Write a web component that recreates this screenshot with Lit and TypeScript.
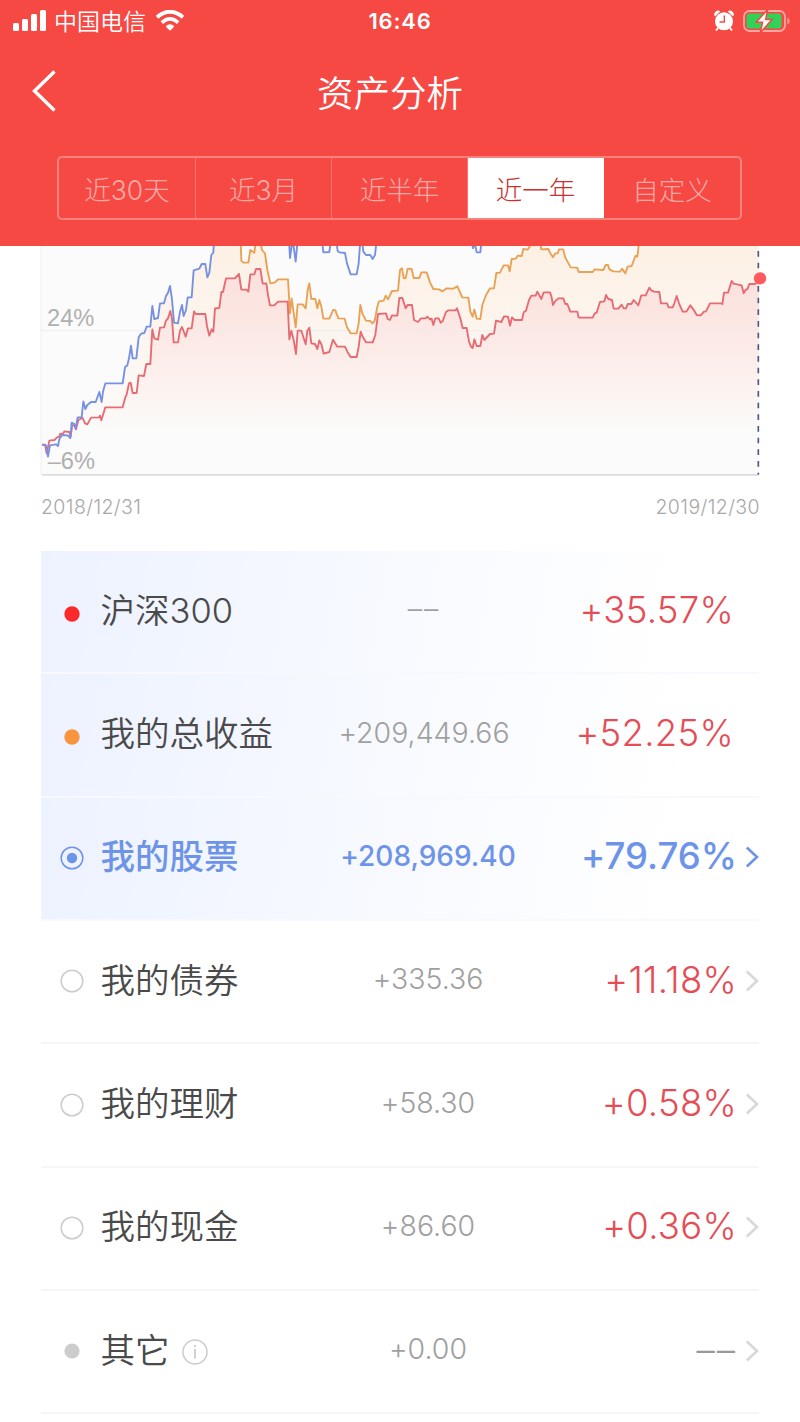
import { LitElement, html, svg, css, nothing } from "lit";
import { customElement, property, state } from "lit/decorators.js";
import { classMap } from "lit/directives/class-map.js";

interface Row {
  name: string;
  amount: string;
  percent: string;
  marker: "index" | "total" | "picked" | "radio" | "other";
  tinted?: boolean;
  link?: boolean;
  info?: boolean;
}

const ROWS: Row[] = [
  { name: "沪深300", amount: "––", percent: "+35.57%", marker: "index", tinted: true },
  { name: "我的总收益", amount: "+209,449.66", percent: "+52.25%", marker: "total", tinted: true },
  { name: "我的股票", amount: "+208,969.40", percent: "+79.76%", marker: "picked", tinted: true, link: true },
  { name: "我的债券", amount: "+335.36", percent: "+11.18%", marker: "radio", link: true },
  { name: "我的理财", amount: "+58.30", percent: "+0.58%", marker: "radio", link: true },
  { name: "我的现金", amount: "+86.60", percent: "+0.36%", marker: "radio", link: true },
  { name: "其它", amount: "+0.00", percent: "––", marker: "other", link: true, info: true },
];

// Series are stored at three units per CSS pixel.
const INDEX_LINE =
  "126,614 135,614 140,640 148,602 164,600 170,593 178,590 180,582 190,580 193,574 208,576 212,590 216,560 223,552 228,568 235,540 248,534 255,550 262,553 273,533 297,532 300,527 304,541 316,502 368,502 376,472 380,463 387,430 392,428 398,459 410,459 416,406 432,408 439,372 451,372 457,268 463,295 474,299 480,263 492,262 498,242 504,235 511,213 516,235 521,307 534,307 540,272 546,261 557,290 564,265 575,265 582,214 587,222 616,222 621,258 628,287 635,268 640,275 645,205 658,204 664,156 669,156 678,115 705,115 717,102 724,149 739,149 745,155 751,103 763,103 768,87 781,87 788,131 799,130 804,165 810,196 823,196 834,185 863,185 868,298 874,272 881,300 888,342 893,272 904,272 917,313 922,272 928,263 934,310 945,312 952,327 958,301 965,315 971,341 988,336 999,299 1012,320 1035,320 1042,335 1052,351 1070,351 1076,320 1082,275 1088,290 1098,307 1118,307 1126,285 1134,222 1158,220 1163,237 1170,240 1176,226 1192,227 1198,174 1207,174 1217,205 1223,195 1236,195 1242,240 1254,246 1263,235 1277,235 1282,230 1290,238 1295,236 1300,255 1306,235 1316,235 1322,248 1328,243 1338,216 1345,211 1366,211 1371,205 1381,235 1388,264 1400,264 1407,305 1413,320 1418,324 1423,298 1430,318 1441,318 1447,285 1453,300 1470,282 1482,281 1488,242 1504,246 1512,229 1524,230 1530,257 1536,232 1544,240 1566,240 1571,217 1578,212 1587,180 1594,167 1607,167 1612,155 1624,177 1631,157 1650,157 1654,168 1659,195 1665,184 1675,175 1690,175 1696,192 1702,192 1711,215 1732,215 1736,233 1778,233 1784,220 1790,218 1800,186 1813,184 1818,165 1825,177 1836,180 1841,206 1855,206 1865,194 1871,205 1878,205 1883,192 1894,192 1901,180 1915,196 1924,166 1937,166 1948,143 1954,151 1962,155 1978,156 1983,190 2001,190 2006,202 2018,202 2023,190 2030,168 2037,190 2048,215 2059,215 2071,196 2082,211 2090,225 2102,226 2112,215 2118,214 2130,190 2165,190 2167,193 2172,158 2184,158 2195,123 2201,131 2225,136 2231,160 2238,148 2242,148 2248,132 2266,132 2277,118";

const TOTAL_LINE =
  "722,0 724,62 730,68 745,68 751,30 763,38 768,0 780,0 786,30 795,40 802,90 811,130 823,128 835,118 864,118 870,220 875,175 887,262 893,193 908,193 917,205 923,150 928,130 934,177 946,177 952,205 958,180 964,200 970,236 988,236 1000,209 1006,211 1015,235 1034,236 1041,262 1052,280 1070,280 1076,250 1081,195 1087,220 1098,242 1111,243 1117,250 1124,243 1132,200 1137,184 1151,182 1157,167 1164,178 1176,153 1194,152 1200,90 1206,85 1211,114 1217,114 1223,86 1235,87 1241,114 1258,114 1264,97 1280,97 1290,127 1300,147 1317,148 1328,154 1340,145 1360,146 1372,139 1387,172 1405,173 1411,215 1418,230 1423,208 1430,236 1441,237 1447,195 1458,165 1470,145 1482,145 1489,99 1500,98 1511,76 1524,76 1529,94 1535,57 1547,56 1553,47 1565,48 1570,27 1583,29 1590,18 1600,10 1620,10 1624,28 1645,27 1650,38 1659,52 1666,40 1673,40 1677,28 1689,28 1696,53 1712,82 1732,83 1736,96 1778,96 1784,88 1810,90 1817,75 1824,75 1828,88 1840,94 1860,95 1866,86 1876,100 1883,80 1895,78 1906,48 1912,50 1918,0";

const STOCK_RISE =
  "126,614 138,616 144,650 150,616 162,614 169,613 174,618 178,598 186,585 203,586 211,594 215,548 222,552 227,566 233,532 245,532 250,484 256,507 262,495 273,486 287,486 298,456 305,486 309,455 316,430 368,430 375,382 382,376 387,355 393,317 398,355 409,355 416,292 423,281 433,279 440,260 451,260 457,198 463,237 474,234 480,190 492,190 498,168 504,158 510,138 516,178 522,248 534,250 540,215 546,195 551,228 558,210 563,172 575,172 581,91 598,86 605,72 616,72 622,112 628,98 634,45 640,38 642,0";

const STOCK_DIPS = [
  "867,0 870,54 876,12 880,12 887,65 893,0",
  "966,0 970,37 988,36 993,0",
  "1009,0 1013,33 1018,37 1035,39 1041,70 1052,103 1070,103 1076,70 1081,0 1086,0 1090,35 1098,45 1111,45 1118,57 1125,45 1130,0",
  "1416,8 1419,25 1424,8 1430,37 1441,37 1445,0",
];

const HAN = css`"Inter", "Noto Sans CJK SC", sans-serif`;

@customElement("status-bar")
class StatusBar extends LitElement {
  static styles = css`
    :host {
      display: grid;
      grid-template-columns: 1fr auto 1fr;
      align-items: center;
      height: 40px;
      padding: 0 10px 0 12px;
      color: #fff;
      font-family: ${HAN};
    }
    .side { display: flex; align-items: center; }
    .end { justify-content: flex-end; }
    .carrier { font-size: 23px; font-weight: 350; line-height: 40px; margin: 2px 9px 0 7px; }
    .time { font-size: 22px; font-weight: 600; letter-spacing: 0.8px; margin-right: 2px; }
    svg { display: block; flex: none; }
    .clock { margin-right: 9px; }
  `;
  render() {
    return html`
      <div class="side">
        <svg width="35" height="24" viewBox="0 0 35 24" fill="#fff">
          <rect x="1" y="14" width="6" height="8" rx="1.5" />
          <rect x="10" y="10" width="6" height="12" rx="1.5" />
          <rect x="19" y="5" width="6" height="17" rx="1.5" />
          <rect x="28" y="1" width="6" height="21" rx="1.5" />
        </svg>
        <span class="carrier">中国电信</span>
        <svg width="30" height="22" viewBox="0 0 30 22">
          <path d="M2 7.2Q15-3.8 28 7.2" fill="none" stroke="#fff" stroke-width="3.8" />
          <path d="M6.8 12.6Q15 5 23.2 12.6" fill="none" stroke="#fff" stroke-width="3.6" />
          <path d="M10.8 16Q15 12.6 19.2 16Q18.6 17.8 15 20.8Q11.4 17.8 10.8 16Z" fill="#fff" />
        </svg>
      </div>
      <span class="time">16:46</span>
      <div class="side end">
        <svg class="clock" width="20" height="22" viewBox="0 0 20 22">
          <path d="M1 6.4A3.6 3.6 0 0 1 6.3 1.6ZM19 6.4A3.6 3.6 0 0 0 13.7 1.6Z" fill="#fff" />
          <path d="M4 18L2 20.5M16 18L18 20.5" stroke="#fff" stroke-width="2" />
          <circle cx="10" cy="11.3" r="9" fill="#fff" />
          <path d="M10.3 5.6V12H5.6" fill="none" stroke="#f64944" stroke-width="1.4" />
        </svg>
        <svg width="47" height="24" viewBox="0 0 47 24">
          <rect x="1" y="2" width="41" height="20" rx="5.5" fill="none" stroke="#fba7a4" stroke-width="1.8" />
          <path d="M44.5 8.5Q46.6 9.5 46.6 12T44.5 15.5Z" fill="#fba7a4" />
          <rect x="3.5" y="4.5" width="35" height="15" rx="3" fill="#32d158" />
          <path d="M24.6 .5L13.2 13.3H19.6L17.2 23.8L29 10.6H22.7Z" fill="#fff" stroke="#f64944" stroke-width="1.5" />
        </svg>
      </div>
    `;
  }
}

@customElement("trend-chart")
class TrendChart extends LitElement {
  static styles = css`
    :host { display: block; font-family: ${HAN}; }
    svg { display: block; width: 800px; height: 230px; }
    .line { fill: none; stroke-width: 5.6; stroke-linejoin: round; }
    .scale { font-family: "Liberation Sans", sans-serif; font-size: 71px; fill: #b0b0b0; }
    .dates {
      display: flex;
      justify-content: space-between;
      padding: 19px 40px 0 41px;
      font-size: 19.5px;
      line-height: 24px;
      font-weight: 300;
      letter-spacing: 0.4px;
      color: #a8a8a8;
    }
  `;
  render() {
    return html`
      <svg viewBox="0 18 2400 690">
        <defs>
          <linearGradient id="warm" gradientUnits="userSpaceOnUse" x1="0" y1="0" x2="0" y2="600">
            <stop offset="0" stop-color="#fdf0e4" />
            <stop offset="1" stop-color="#fdf0e4" stop-opacity="0" />
          </linearGradient>
          <linearGradient id="rose" gradientUnits="userSpaceOnUse" x1="0" y1="80" x2="0" y2="560">
            <stop offset="0" stop-color="#fbd9d8" stop-opacity=".75" />
            <stop offset="1" stop-color="#fbd9d8" stop-opacity="0" />
          </linearGradient>
        </defs>
        <rect x="123" y="0" width="2154" height="704" fill="#fbfbfb" />
        <path d="M123 0V704" stroke="#eee" stroke-width="3" />
        <path d=${`M${STOCK_RISE} ${TOTAL_LINE} 2277,0 2277,704 126,704Z`} fill="url(#warm)" />
        <path d=${`M${INDEX_LINE} 2277,704 126,704Z`} fill="url(#rose)" />
        <path d="M123 272H2277" stroke="#efeded" stroke-width="3" />
        <path d="M126 704.5H2274" stroke="#dcdcdc" stroke-width="5" />
        <polyline class="line" points=${TOTAL_LINE} stroke="#e9a155" />
        <polyline class="line" points=${INDEX_LINE} stroke="#e66b72" />
        ${[STOCK_RISE, ...STOCK_DIPS].map((p) => svg`<polyline class="line" points=${p} stroke="#7791e2" />`)}
        <text class="scale" x="141" y="257">24%</text>
        <text class="scale" x="143" y="686">–6%</text>
        <path d="M2275 33V704" stroke="#4c5786" stroke-width="5" stroke-dasharray="17 18" />
        <circle cx="2280" cy="115" r="18.5" fill="#fd5a5e" />
      </svg>
      <div class="dates"><span>2018/12/31</span><span>2019/12/30</span></div>
    `;
  }
}

@customElement("asset-row")
class AssetRow extends LitElement {
  @property({ attribute: false }) row!: Row;
  static styles = css`
    :host { display: block; font-family: ${HAN}; font-feature-settings: "calt" 0; }
    .row {
      display: grid;
      grid-template-columns: 59.5px 230px 187px 1fr;
      align-items: center;
      box-sizing: border-box;
      height: 123.35px;
      padding-bottom: 2px;
      border-bottom: 2px solid #f6f6f6;
      color: #4a4a4a;
      line-height: 50px;
    }
    .tinted {
      background: linear-gradient(100deg, #edf2ff 0%, #f8faff 52%, #fff 90%);
      border-bottom-color: #f8f9fc;
    }
    .link { grid-template-columns: 59.5px 234px 187px 1fr; }
    .marker { display: block; width: 24px; height: 24px; margin: 1px 0 0 18.5px; }
    .index .marker, .total .marker { margin-top: 6px; }
    .name { display: flex; align-items: center; font-size: 34.5px; font-weight: 350; white-space: nowrap; }
    .info { margin: 2px 0 0 12px; }
    .amount { text-align: center; font-size: 28.5px; font-weight: 300; color: #a0a0a0; padding-bottom: 3px; }
    .end { display: flex; justify-content: flex-end; align-items: center; color: #e54d56; padding: 0 25px 2px 0; }
    .link .end { padding-right: 0; }
    .percent { font-size: 36.5px; font-weight: 300; letter-spacing: 0.3px; }
    .chevron { display: block; flex: none; margin: 2px 0 0 8px; stroke: #d8d8d8; }
    .picked, .picked .amount, .picked .end { color: #6d94e9; }
    .picked .name { font-weight: 500; }
    .picked .percent { font-weight: 450; letter-spacing: 0; }
    .picked .amount { font-size: 28px; font-weight: 450; }
    .picked .chevron { stroke: #6d94e9; }
    .index .amount, .other .percent { letter-spacing: 2px; }
    .other .percent { color: #999; }
  `;
  private marker() {
    switch (this.row.marker) {
      case "index":
        return svg`<circle cx="12" cy="12" r="7.7" fill="#fc292c" />`;
      case "total":
        return svg`<circle cx="12" cy="12" r="7.7" fill="#fa953f" />`;
      case "other":
        return svg`<circle cx="12" cy="12" r="7.6" fill="#ccc" />`;
      case "picked":
        return svg`<circle cx="12" cy="12" r="10.8" fill="none" stroke="#6d94e9" stroke-width="1.5" /><circle cx="12" cy="12" r="5.2" fill="#6d94e9" />`;
      default:
        return svg`<circle cx="12" cy="12" r="10.8" fill="none" stroke="#ccc" stroke-width="1.5" />`;
    }
  }
  render() {
    const r = this.row;
    return html`
      <div class=${classMap({ row: true, tinted: !!r.tinted, link: !!r.link, [r.marker]: true })}>
        <svg class="marker" viewBox="0 0 24 24">${this.marker()}</svg>
        <span class="name">${r.name}${r.info
          ? html`<svg class="info" width="26" height="26" viewBox="0 0 26 26">
              <circle cx="13" cy="13" r="12" fill="none" stroke="#ccc" stroke-width="1.5" />
              <path d="M13 10V19.5M13 6V8" stroke="#ccc" stroke-width="1.8" />
            </svg>`
          : nothing}</span>
        <span class="amount">${r.amount}</span>
        <span class="end">
          <span class="percent">${r.percent}</span>
          ${r.link
            ? html`<svg class="chevron" width="14" height="22" viewBox="0 0 14 22">
                <path d="M1.8 1.5L12 11L1.8 20.5" fill="none" stroke-width="2.6" />
              </svg>`
            : nothing}
        </span>
      </div>
    `;
  }
}

@customElement("app-root")
class AppRoot extends LitElement {
  @state() private period = "近一年";
  static styles = css`
    :host {
      display: block;
      width: 800px;
      height: 1422px;
      overflow: hidden;
      background: #fff;
      font-family: ${HAN};
    }
    header { box-sizing: border-box; height: 246px; background: #f64944; color: #fff; }
    .nav { display: grid; grid-template-columns: 80px 1fr 80px; align-items: center; height: 100px; padding-top: 2px; box-sizing: border-box; }
    .back { display: block; margin-left: 31px; }
    h1 { margin: 5px 0 0; text-align: center; font-size: 36.5px; font-weight: 350; line-height: 54px; padding-right: 20px; }
    .tabs {
      display: grid;
      grid-template-columns: 137px 136px 136px 136px 1fr;
      box-sizing: border-box;
      width: 685px;
      height: 64px;
      margin: 16px 0 0 57px;
      border: 2px solid #f9827e;
      border-radius: 5px;
    }
    .tab {
      border: 0;
      border-right: 1px solid #f9736e;
      padding: 1px 0 0;
      background: none;
      color: #fba9a6;
      font: 300 26.5px ${HAN};
    }
    .tab:last-child { border-right: 0; }
    .active { background: #fff; color: #c8302f; border-right-color: #fff; }
    .list { margin: 32px 41px 0; }
  `;
  render() {
    const periods = ["近30天", "近3月", "近半年", "近一年", "自定义"];
    return html`
      <header>
        <status-bar></status-bar>
        <div class="nav">
          <svg class="back" width="26" height="42" viewBox="0 0 26 42">
            <path d="M23.5 1.5L3.5 21L23.5 40.5" fill="none" stroke="#fff" stroke-width="3.4" />
          </svg>
          <h1>资产分析</h1>
        </div>
        <div class="tabs">
          ${periods.map(
            (p) => html`<button
              class=${classMap({ tab: true, active: p === this.period })}
              @click=${() => (this.period = p)}
            >${p}</button>`
          )}
        </div>
      </header>
      <trend-chart></trend-chart>
      <div class="list">${ROWS.map((row) => html`<asset-row .row=${row}></asset-row>`)}</div>
    `;
  }
}
